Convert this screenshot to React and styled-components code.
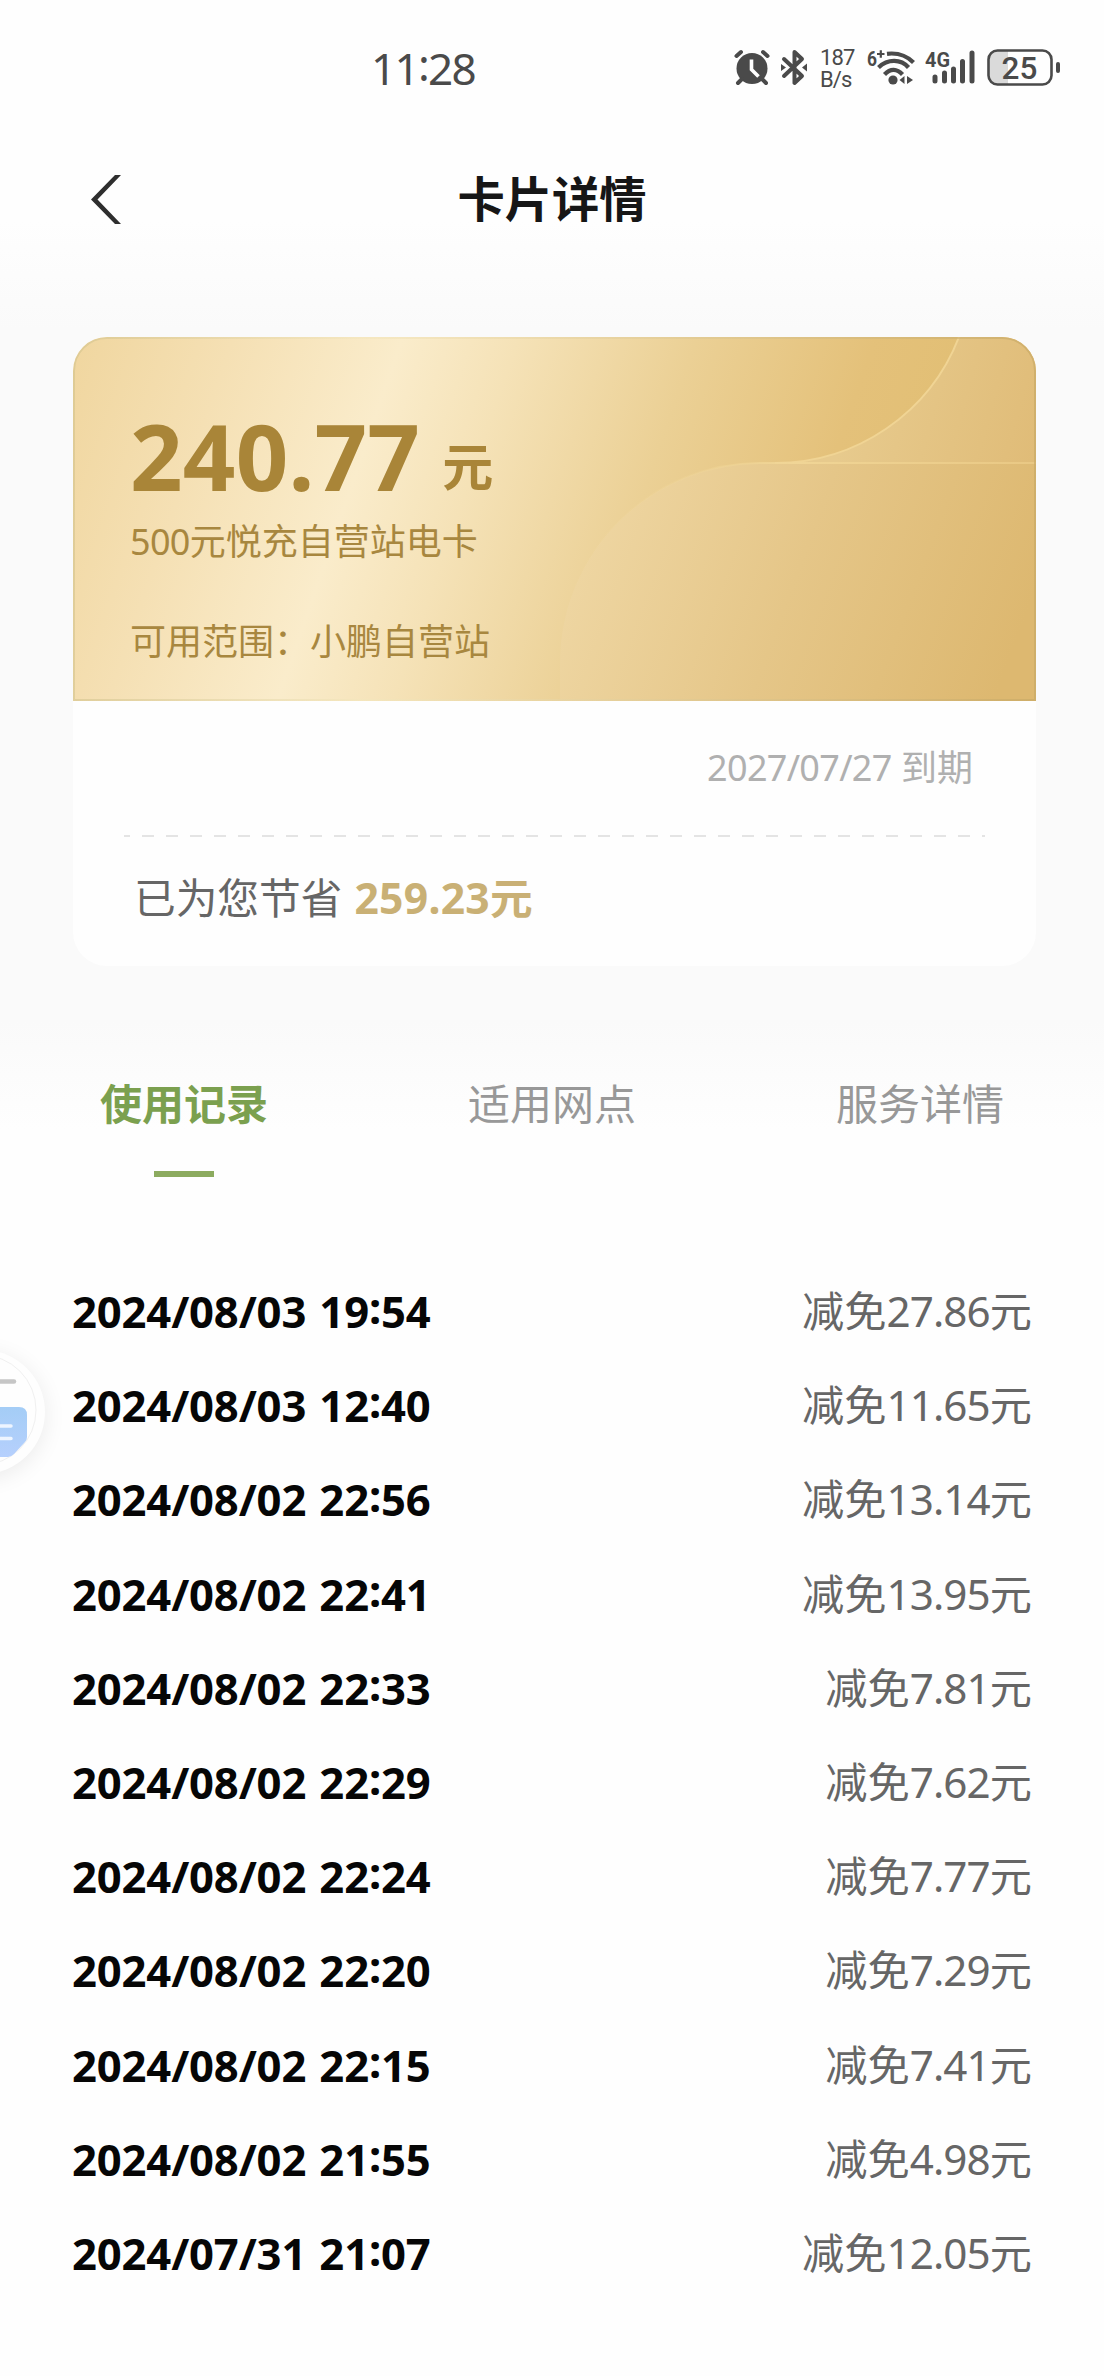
import styled, { createGlobalStyle } from 'styled-components';


const GlobalStyle = createGlobalStyle`
    body {
        margin: 0;
        background: #fefefe;
        font-family: 'Noto Sans', 'Noto Sans CJK SC', sans-serif;
    }
`;

const Screen = styled.div`
    position: relative;
    width: 1104px;
    height: 2376px;
    overflow: hidden;
    background: linear-gradient(
        #fefefe 0,
        #fefefe 220px,
        #fafafa 330px,
        #fafafa 1020px,
        #fefefe 1130px
    );
`;

const StatusBar = styled.div`
    display: flex;
    align-items: center;
    justify-content: space-between;

    height: 136px;
    padding: 0 44px 0 371px;
    box-sizing: border-box;

    color: #4a4a4a;
`;
const Clock = styled.span`
    font-size: 44px;
    line-height: 136px;
    letter-spacing: -1.7px;
`;
const StatusIcons = styled.div`
    display: flex;
    align-items: center;
`;
const StatusIcon = styled.svg`
    display: block;
    width: ${({$width}) => $width}px;
    height: 40px;
    margin-right: ${({$gap}) => $gap}px;

    font-family: Roboto, sans-serif;
`;
const NetSpeed = styled.div`
    display: flex;
    flex-direction: column;

    width: 36px;
    margin: 1px 11px 0 0;

    font-family: Roboto, sans-serif;
    font-size: 22px;
    line-height: 22px;
    letter-spacing: -0.9px;
`;

const Header = styled.header`
    display: grid;
    grid-template-columns: 1fr auto 1fr;
    align-items: center;

    height: 126px;
    padding: 0 91px;
`;
const BackIcon = styled.svg`
    width: 30px;
    height: 49px;
`;
const Title = styled.h1`
    margin: 0;

    color: #161616;
    font-size: 47.3px;
    font-weight: 700;
    line-height: 126px;
`;

const Card = styled.section`
    width: 963px;
    margin: 75px 0 0 73px;
    overflow: hidden;

    border-radius: 34px;
    background: #fefefe;
`;
const CardTop = styled.div`
    position: relative;
    height: 364px;
    padding: 67px 57px 0;
    box-sizing: border-box;

    color: #a98538;
`;
const CardArt = styled.svg`
    position: absolute;
    top: 0;
    left: 0;
`;
const Balance = styled.div`
    position: relative;
    display: flex;
    align-items: baseline;

    height: 106px;

    font-size: 92px;
    font-weight: 700;
    line-height: 104px;
    letter-spacing: 0.2px;
`;
const BalanceUnit = styled.span`
    position: relative;
    top: -5px;
    margin-left: 22px;

    font-size: 51px;
`;
const CardLine = styled.div`
    position: relative;
    margin-bottom: ${({$gap}) => $gap || 0}px;

    color: #a8873f;
    font-size: 36px;
    line-height: 64px;
`;
const Digits = styled.span`
    letter-spacing: ${({$spacing}) => $spacing || -0.7}px;
`;
const CardBottom = styled.div`
    height: 265px;
    padding: 0 51px;
    box-sizing: border-box;
`;
const Expiry = styled.div`
    padding-right: 12px;

    color: #b0b0b0;
    font-size: 36px;
    line-height: 134px;
    text-align: right;
`;
const Divider = styled.div`
    height: 2px;
    background: repeating-linear-gradient(
        90deg,
        #e4e4e4 0,
        #e4e4e4 6px,
        transparent 6px,
        transparent 18px,
        #e4e4e4 18px,
        #e4e4e4 24px
    );
`;
const Saved = styled.div`
    padding-left: 10px;

    color: #666;
    font-size: 41.7px;
    line-height: 120px;
`;
const SavedAmount = styled.span`
    margin-left: 12px;

    color: #c9b075;
    font-size: 42.6px;
    font-weight: 700;
    letter-spacing: 0.3px;
`;

const Tabs = styled.nav`
    display: grid;
    grid-template-columns: repeat(3, 1fr);

    height: 117px;
    margin-top: 94px;
`;
const Tab = styled.div`
    display: flex;
    flex-direction: column;
    align-items: center;

    color: ${({$active}) => $active ? '#7ba04f' : '#989898'};
    font-size: 42px;
    font-weight: ${({$active}) => $active ? 700 : 400};
    line-height: 88px;

    &::after {
        content: '';
        width: 60px;
        height: 6px;
        margin-top: 23px;
        background: ${({$active}) => $active ? '#8cab5f' : 'transparent'};
    }
`;

const Records = styled.ul`
    margin: 87px 0 0;
    padding: 0 72px;

    list-style: none;
`;
const Record = styled.li`
    display: flex;
    justify-content: space-between;

    height: 94.2px;

    line-height: 94px;
`;
const RecordTime = styled.span`
    color: #060606;
    font-size: 43.6px;
    font-weight: 700;
    letter-spacing: -0.15px;
    word-spacing: 2px;
`;
const Colon = styled.span`
    position: relative;
    top: -4px;
`;
const RecordAmount = styled.span`
    color: #666;
    font-size: 42.2px;
`;

const FloatingButton = styled.div`
    position: absolute;
    top: 1350px;
    left: -79px;

    width: 124px;
    height: 124px;

    border-radius: 50%;
    background: #fefefe;
    box-shadow: 0 4px 22px rgba(0, 0, 0, 0.08);
`;


const records = [
    ['2024/08/03', '19:54', '27.86'],
    ['2024/08/03', '12:40', '11.65'],
    ['2024/08/02', '22:56', '13.14'],
    ['2024/08/02', '22:41', '13.95'],
    ['2024/08/02', '22:33', '7.81'],
    ['2024/08/02', '22:29', '7.62'],
    ['2024/08/02', '22:24', '7.77'],
    ['2024/08/02', '22:20', '7.29'],
    ['2024/08/02', '22:15', '7.41'],
    ['2024/08/02', '21:55', '4.98'],
    ['2024/07/31', '21:07', '12.05'],
];

const tabs = ['使用记录', '适用网点', '服务详情'];


const Time = ({value}) => {
    const [hours, minutes] = value.split(':');

    return <>{hours}<Colon>:</Colon>{minutes}</>;
};

const Status = () => (
    <StatusBar>
        <Clock><Time value='11:28'/></Clock>
        <StatusIcons>
            <StatusIcon $width={36} $gap={11} viewBox='0 0 36 40'>
                <circle cx='18' cy='20.500' r='15.500' fill='currentColor'/>
                <g stroke='currentColor' strokeWidth='4' strokeLinecap='round' fill='none'>
                    <path d='M2.500 8 7 4M33.500 8 29 4M8 31l-4 4M28 31l4 4'/>
                </g>
                <path d='M17.500 11.500v10l7 7' stroke='#fefefe' strokeWidth='3.600' fill='none'/>
            </StatusIcon>
            <StatusIcon $width={26} $gap={13} viewBox='0 0 26 40'>
                <path
                    d='M3 11l18 17-7.500 7v-31l7.500 7L3 28'
                    fill='none'
                    stroke='currentColor'
                    strokeWidth='4'
                    strokeLinejoin='round'
                    strokeLinecap='round'
                />
                <path d='M0 16l5 3.500-5 3.500zM26 15.500v8l-5-4z' fill='currentColor'/>
            </StatusIcon>
            <NetSpeed>
                <span>187</span>
                <span>B/s</span>
            </NetSpeed>
            <StatusIcon $width={48} $gap={10} viewBox='0 0 48 40'>
                <text x='0' y='17.500' fontSize='19.500' fontWeight='700' fill='currentColor' textLength='10' lengthAdjust='spacingAndGlyphs'>6</text>
                <path d='M10 6h7.500M13.800 2.200v7.600' stroke='currentColor' strokeWidth='2.200'/>
                <g fill='none' stroke='currentColor' strokeWidth='4.200'>
                    <path d='M20 5.800C31 4.500 40 8 46.500 14.500'/>
                    <path d='M11.500 19.500C21 10.500 34 11 41.500 19.500'/>
                    <path d='M17.500 26.500C23.500 20 30 20.500 35.500 26.500'/>
                </g>
                <circle cx='26' cy='32' r='4.600' fill='currentColor'/>
                <path d='M32.500 32l5-4v8zM46 32l-6-4v8z' fill='currentColor'/>
            </StatusIcon>
            <StatusIcon $width={50} $gap={12} viewBox='0 0 50 40'>
                <text x='0' y='19' fontSize='21' fontWeight='700' fill='currentColor' textLength='25' lengthAdjust='spacingAndGlyphs'>4G</text>
                <g stroke='currentColor' strokeWidth='5' strokeLinecap='round'>
                    <path d='M10 29v4M19.500 25v8M28.500 21v12M37.500 13.500v19.500M47 5v28'/>
                </g>
            </StatusIcon>
            <StatusIcon $width={73} $gap={0} viewBox='0 0 73 40'>
                <path d='M10 2.500h11v34H10q-8.500 0-8.500-9V11.500q0-9 8.500-9z' fill='#dadada'/>
                <rect x='1.500' y='2.500' width='63' height='34' rx='9' fill='none' stroke='currentColor' strokeWidth='2.600'/>
                <rect x='69' y='14' width='4' height='11' rx='2' fill='currentColor'/>
                <text x='32.500' y='31' fontSize='31.500' fontWeight='500' textAnchor='middle' fill='currentColor'>25</text>
            </StatusIcon>
        </StatusIcons>
    </StatusBar>
);

const CardBackground = () => (
    <CardArt width='963' height='364' viewBox='0 0 963 364'>
        <defs>
            <linearGradient id='base' gradientUnits='userSpaceOnUse' x1='0' y1='0' x2='797' y2='275'>
                <stop offset='0' stopColor='#f0d69f'/>
                <stop offset='0.18' stopColor='#f5e0b4'/>
                <stop offset='0.37' stopColor='#faeccb'/>
                <stop offset='0.5' stopColor='#f5e2b7'/>
                <stop offset='0.7' stopColor='#ebd095'/>
                <stop offset='0.9' stopColor='#e4c17a'/>
                <stop offset='1' stopColor='#e2bf75'/>
            </linearGradient>
            <linearGradient id='lower' gradientUnits='userSpaceOnUse' x1='500' y1='180' x2='930' y2='340'>
                <stop offset='0' stopColor='#efd7a4'/>
                <stop offset='0.5' stopColor='#e5c688'/>
                <stop offset='1' stopColor='#ddb870'/>
            </linearGradient>
            <linearGradient id='corner' gradientUnits='userSpaceOnUse' x1='780' y1='60' x2='963' y2='110'>
                <stop offset='0' stopColor='#e7ca8d'/>
                <stop offset='1' stopColor='#e0bc78'/>
            </linearGradient>
            <linearGradient id='edge' gradientUnits='userSpaceOnUse' x1='487' y1='0' x2='963' y2='0'>
                <stop offset='0' stopColor='#f2d898' stopOpacity='0'/>
                <stop offset='0.3' stopColor='#f2d898' stopOpacity='0.3'/>
                <stop offset='0.5' stopColor='#f0d596'/>
                <stop offset='1' stopColor='#e9c884'/>
            </linearGradient>
            <linearGradient id='outline' x1='0' y1='0' x2='1' y2='0'>
                <stop offset='0' stopColor='#cdbf88' stopOpacity='0.5'/>
                <stop offset='0.3' stopColor='#f3e6bd' stopOpacity='0.6'/>
                <stop offset='1' stopColor='#c9aa66' stopOpacity='0.7'/>
            </linearGradient>
        </defs>
        <rect width='963' height='364' fill='url(#base)'/>
        <path d='M886 0A197 197 0 0 1 702 126H963V0z' fill='url(#corner)'/>
        <path d='M963 126H687A200 200 0 0 0 487 326V364H963z' fill='url(#lower)'/>
        <path d='M886 0A197 197 0 0 1 702 126' fill='none' stroke='#f0d494' strokeWidth='2'/>
        <path d='M963 126H687A200 200 0 0 0 487 326' fill='none' stroke='url(#edge)' strokeWidth='2'/>
        <path d='M1 364V34A33 33 0 0 1 34 1H929A33 33 0 0 1 962 34V363H0' fill='none' stroke='url(#outline)' strokeWidth='2'/>
    </CardArt>
);

const App = () => (
    <Screen>
        <GlobalStyle/>
        <Status/>
        <Header>
            <BackIcon viewBox='0 0 30 49'>
                <path d='M24 0h6L6.500 24.500 30 49h-6L0 24.500z' fill='#2e2e2e'/>
            </BackIcon>
            <Title>卡片详情</Title>
        </Header>
        <Card>
            <CardTop>
                <CardBackground/>
                <Balance>
                    240.77
                    <BalanceUnit>元</BalanceUnit>
                </Balance>
                <CardLine $gap={36}><Digits>500</Digits>元悦充自营站电卡</CardLine>
                <CardLine>可用范围：小鹏自营站</CardLine>
            </CardTop>
            <CardBottom>
                <Expiry><Digits>2027/07/27</Digits> 到期</Expiry>
                <Divider/>
                <Saved>
                    已为您节省
                    <SavedAmount>259.23元</SavedAmount>
                </Saved>
            </CardBottom>
        </Card>
        <Tabs>
            {tabs.map((tab, index) => (
                <Tab key={tab} $active={index === 0}>{tab}</Tab>
            ))}
        </Tabs>
        <Records>
            {records.map(([date, time, amount]) => (
                <Record key={date + time}>
                    <RecordTime>{date} <Time value={time}/></RecordTime>
                    <RecordAmount>减免<Digits $spacing={-0.9}>{amount}</Digits>元</RecordAmount>
                </Record>
            ))}
        </Records>
        <FloatingButton>
            <svg width='124' height='124' viewBox='0 0 124 124'>
                <defs>
                    <linearGradient id='note' x1='0' y1='0' x2='0' y2='1'>
                        <stop offset='0' stopColor='#a4cdf6'/>
                        <stop offset='1' stopColor='#b6d0fd'/>
                    </linearGradient>
                </defs>
                <circle cx='60' cy='60' r='55' fill='none' stroke='#f0f0f0' strokeWidth='1'/>
                <path d='M60 31.500H93' stroke='#c6c6c6' strokeWidth='4.500' strokeLinecap='round'/>
                <path d='M60 57H98q8 0 8 8V87q0 3-2 5L93 104q-3 3-6 3H60z' fill='url(#note)'/>
                <path d='M60 76H90M60 88.500H90' stroke='#eef5ff' strokeWidth='3.500' strokeLinecap='round'/>
            </svg>
        </FloatingButton>
    </Screen>
);

export default App;
